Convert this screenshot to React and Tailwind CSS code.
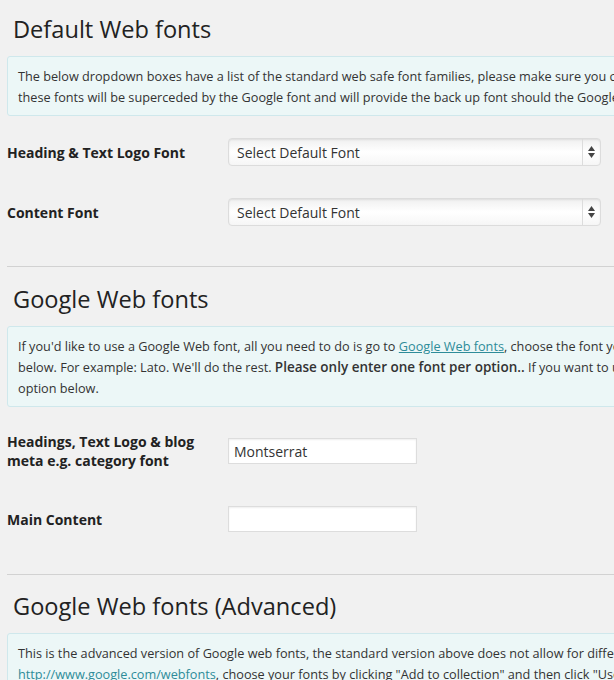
const FONT = { fontFamily: '"Open Sans", "Noto Sans", sans-serif' };

function Notice({ lines }) {
  return (
    <div className="mt-[12px] rounded-[3px] border border-[#cfe8ec] bg-[#ecf7f7] pl-[10px] pt-[9px] pb-[7px] text-[12.7px] leading-[21px] text-[#333]">
      {lines.map((l, i) => (
        <div key={i} className="whitespace-nowrap">{l}</div>
      ))}
    </div>
  );
}

function Heading({ children, className = '' }) {
  return (
    <h2 className={`pl-[6px] text-[23.6px] leading-[30px] font-normal text-[#222] ${className}`}>{children}</h2>
  );
}

function SelectBox() {
  return (
    <div className="flex h-[28px] w-[373px] items-center rounded-[4px] border border-[#dcdcdc] bg-gradient-to-b from-[#f0f0f0] via-[#ffffff] to-[#f6f6f6] shadow-[inset_0_1px_2px_rgba(0,0,0,0.08)]">
      <div className="flex-1 pl-[8px] text-[14px] text-[#333]">Select Default Font</div>
      <div className="flex h-full w-[18px] flex-col items-center justify-center gap-[2px] border-l border-[#dcdcdc]">
        <svg width="7" height="5" viewBox="0 0 7 5"><path d="M3.5 0L7 5H0z" fill="#444" /></svg>
        <svg width="7" height="5" viewBox="0 0 7 5"><path d="M0 0h7L3.5 5z" fill="#444" /></svg>
      </div>
    </div>
  );
}

function TextInput({ value }) {
  return (
    <div className="flex h-[26px] w-[189px] items-center border border-[#dddddd] bg-white pl-[5px] text-[14px] text-[#333] shadow-[inset_0_1px_2px_rgba(0,0,0,0.07)]">
      {value}
    </div>
  );
}

function Row({ label, children, h }) {
  return (
    <div className={`flex items-center ${h}`}>
      <div className="w-[221px] pr-[21px] text-[14px] leading-[19px] font-bold text-[#222]">{label}</div>
      {children}
    </div>
  );
}

export default function App() {
  return (
    <div className="h-[680px] w-[614px] overflow-hidden bg-[#f1f1f1]" style={FONT}>
      <div className="w-[1100px] pl-[7px] pt-[14px]">
        <Heading>Default Web fonts</Heading>
        <Notice
          lines={[
            'The below dropdown boxes have a list of the standard web safe font families, please make sure you choose a font that best matches the Google font you select,',
            'these fonts will be superceded by the Google font and will provide the back up font should the Google font fail to load.',
          ]}
        />
        <div className="mt-[6px]">
          <Row label="Heading & Text Logo Font" h="h-[60px]"><SelectBox /></Row>
          <Row label="Content Font" h="h-[60px]"><SelectBox /></Row>
        </div>
        <hr className="mt-[24px] border-0 border-t border-[#d2d2d2]" />

        <Heading className="mt-[17px]">Google Web fonts</Heading>
        <Notice
          lines={[
            <>If you'd like to use a Google Web font, all you need to do is go to <a href="#" className="text-[#2e8c99] underline">Google Web fonts</a>, choose the font you like and enter its name in the appropriate box</>,
            <>below. For example: Lato. We'll do the rest. <b className="text-[13.5px] font-semibold">Please only enter one font per option..</b> If you want to use more than one weight, use the advanced</>,
            'option below.',
          ]}
        />
        <div className="mt-[10px]">
          <Row label="Headings, Text Logo & blog meta e.g. category font" h="h-[68px]"><TextInput value="Montserrat" /></Row>
          <Row label="Main Content" h="h-[68px]"><TextInput value="" /></Row>
        </div>
        <hr className="mt-[21px] border-0 border-t border-[#d2d2d2]" />

        <Heading className="mt-[16px]">Google Web fonts (Advanced)</Heading>
        <Notice
          lines={[
            'This is the advanced version of Google web fonts, the standard version above does not allow for different weights. To use this go to',
            <><a href="#" className="text-[#2e8c99]">http://www.google.com/webfonts</a>, choose your fonts by clicking "Add to collection" and then click "Use" at the bottom of the page.</>,
          ]}
        />
      </div>
    </div>
  );
}
